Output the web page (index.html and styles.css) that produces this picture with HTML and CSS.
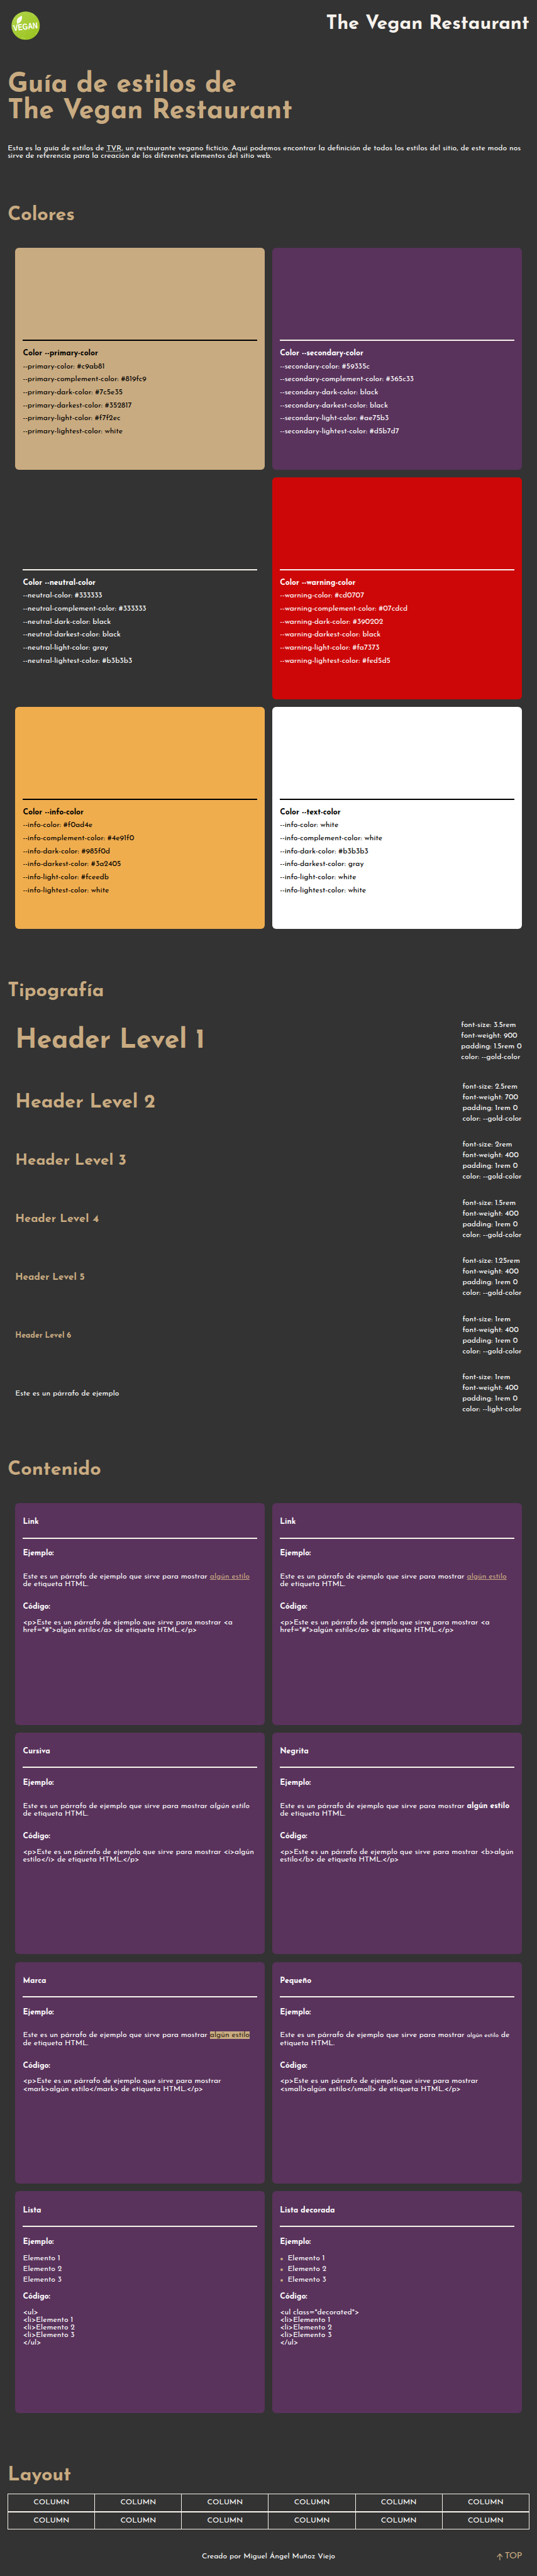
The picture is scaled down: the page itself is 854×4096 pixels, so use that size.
FILE: index.html
```html
<!DOCTYPE html>
<html lang="es">
<head>
<meta charset="utf-8">
<title>Guía de estilos de The Vegan Restaurant</title>
<link rel="stylesheet" href="styles.css">
</head>
<body>
<header class="header">
  <svg class="logo" viewBox="0 0 60 60" role="img" aria-label="Vegan">
    <defs>
      <linearGradient id="leafy" x1="0" y1="0" x2="1" y2="1">
        <stop offset="0" stop-color="#b2d44c"/>
        <stop offset=".5" stop-color="#a5cc33"/>
        <stop offset="1" stop-color="#97c11d"/>
      </linearGradient>
    </defs>
    <circle cx="30" cy="30" r="29.7" fill="url(#leafy)"/>
    <path d="M12 24.500C10 17 14.500 12 22.300 9.500C23 17 20.500 23.500 14 25.200L12.800 27.500Z" fill="#fff"/>
    <path d="M13.500 23L17.500 17.500" stroke="#a9cf3c" stroke-width=".6"/>
    <text class="logo-text" x="5" y="41" textLength="51" lengthAdjust="spacingAndGlyphs" transform="rotate(-6.500 5 41)">VEGAN</text>
    <g fill="#e9f3cf">
      <circle cx="45" cy="5.500" r=".8"/><circle cx="41" cy="3.500" r=".5"/><circle cx="47.500" cy="8" r=".5"/>
      <circle cx="8" cy="15" r=".6"/><circle cx="26" cy="42" r=".6"/><circle cx="27.500" cy="47" r=".5"/>
      <circle cx="24" cy="55" r=".8"/><circle cx="28" cy="57.500" r=".7"/><circle cx="22" cy="57" r=".5"/>
      <circle cx="52" cy="46" r=".7"/><circle cx="56" cy="40" r=".5"/><circle cx="30" cy="4" r=".5"/>
    </g>
  </svg>
  <span class="brand">The Vegan Restaurant</span>
</header>
<main class="main">
  <h1 class="title">Guía de estilos de<br>The Vegan Restaurant</h1>
  <p class="intro">Esta es la guía de estilos de <abbr class="abbr">TVR</abbr>, un restaurante vegano ficticio. Aquí podemos encontrar la definición de todos los estilos del sitio, de este modo nos<br>sirve de referencia para la creación de los diferentes elementos del sitio web.</p>

  <h2 class="section-title section-title--colors">Colores</h2>
  <div class="cards">
    <article class="card card--primary">
      <hr class="swatch-rule">
      <h3 class="swatch-name">Color --primary-color</h3>
      <ul class="swatch-list"><li>--primary-color: #c9ab81</li><li>--primary-complement-color: #819fc9</li><li>--primary-dark-color: #7c5e35</li><li>--primary-darkest-color: #352817</li><li>--primary-light-color: #f7f2ec</li><li>--primary-lightest-color: white</li></ul>
    </article>
    <article class="card card--secondary">
      <hr class="swatch-rule">
      <h3 class="swatch-name">Color --secondary-color</h3>
      <ul class="swatch-list"><li>--secondary-color: #59335c</li><li>--secondary-complement-color: #365c33</li><li>--secondary-dark-color: black</li><li>--secondary-darkest-color: black</li><li>--secondary-light-color: #ae75b3</li><li>--secondary-lightest-color: #d5b7d7</li></ul>
    </article>
    <article class="card card--neutral">
      <hr class="swatch-rule">
      <h3 class="swatch-name">Color --neutral-color</h3>
      <ul class="swatch-list"><li>--neutral-color: #333333</li><li>--neutral-complement-color: #333333</li><li>--neutral-dark-color: black</li><li>--neutral-darkest-color: black</li><li>--neutral-light-color: gray</li><li>--neutral-lightest-color: #b3b3b3</li></ul>
    </article>
    <article class="card card--warning">
      <hr class="swatch-rule">
      <h3 class="swatch-name">Color --warning-color</h3>
      <ul class="swatch-list"><li>--warning-color: #cd0707</li><li>--warning-complement-color: #07cdcd</li><li>--warning-dark-color: #390202</li><li>--warning-darkest-color: black</li><li>--warning-light-color: #fa7373</li><li>--warning-lightest-color: #fed5d5</li></ul>
    </article>
    <article class="card card--info">
      <hr class="swatch-rule">
      <h3 class="swatch-name">Color --info-color</h3>
      <ul class="swatch-list"><li>--info-color: #f0ad4e</li><li>--info-complement-color: #4e91f0</li><li>--info-dark-color: #985f0d</li><li>--info-darkest-color: #3a2405</li><li>--info-light-color: #fceedb</li><li>--info-lightest-color: white</li></ul>
    </article>
    <article class="card card--text">
      <hr class="swatch-rule">
      <h3 class="swatch-name">Color --text-color</h3>
      <ul class="swatch-list"><li>--info-color: white</li><li>--info-complement-color: white</li><li>--info-dark-color: #b3b3b3</li><li>--info-darkest-color: gray</li><li>--info-light-color: white</li><li>--info-lightest-color: white</li></ul>
    </article>
  </div>

  <h2 class="section-title section-title--type">Tipografía</h2>
  <div class="type-rows">
    <div class="type-row type-row--first"><span class="sample sample--1">Header Level 1</span><ul class="specs"><li>font-size: 3.5rem</li><li>font-weight: 900</li><li>padding: 1.5rem 0</li><li>color: --gold-color</li></ul></div>
    <div class="type-row"><span class="sample sample--2">Header Level 2</span><ul class="specs"><li>font-size: 2.5rem</li><li>font-weight: 700</li><li>padding: 1rem 0</li><li>color: --gold-color</li></ul></div>
    <div class="type-row"><span class="sample sample--3">Header Level 3</span><ul class="specs"><li>font-size: 2rem</li><li>font-weight: 400</li><li>padding: 1rem 0</li><li>color: --gold-color</li></ul></div>
    <div class="type-row"><span class="sample sample--4">Header Level 4</span><ul class="specs"><li>font-size: 1.5rem</li><li>font-weight: 400</li><li>padding: 1rem 0</li><li>color: --gold-color</li></ul></div>
    <div class="type-row"><span class="sample sample--5">Header Level 5</span><ul class="specs"><li>font-size: 1.25rem</li><li>font-weight: 400</li><li>padding: 1rem 0</li><li>color: --gold-color</li></ul></div>
    <div class="type-row"><span class="sample sample--6">Header Level 6</span><ul class="specs"><li>font-size: 1rem</li><li>font-weight: 400</li><li>padding: 1rem 0</li><li>color: --gold-color</li></ul></div>
    <div class="type-row"><span class="sample sample--p">Este es un párrafo de ejemplo</span><ul class="specs"><li>font-size: 1rem</li><li>font-weight: 400</li><li>padding: 1rem 0</li><li>color: --light-color</li></ul></div>
  </div>

  <h2 class="section-title section-title--content">Contenido</h2>
  <div class="cards">
    <article class="card card--demo">
      <h3 class="demo-name">Link</h3>
      <hr class="demo-rule">
      <h4 class="demo-label">Ejemplo:</h4>
      <p class="demo-text">Este es un párrafo de ejemplo que sirve para mostrar <a class="link" href="#">algún estilo</a><br>de etiqueta HTML.</p>
      <h4 class="demo-label">Código:</h4>
      <p class="demo-code">&lt;p&gt;Este es un párrafo de ejemplo que sirve para mostrar &lt;a<br>href="#"&gt;algún estilo&lt;/a&gt; de etiqueta HTML.&lt;/p&gt;</p>
    </article>
    <article class="card card--demo">
      <h3 class="demo-name">Link</h3>
      <hr class="demo-rule">
      <h4 class="demo-label">Ejemplo:</h4>
      <p class="demo-text">Este es un párrafo de ejemplo que sirve para mostrar <a class="link" href="#">algún estilo</a><br>de etiqueta HTML.</p>
      <h4 class="demo-label">Código:</h4>
      <p class="demo-code">&lt;p&gt;Este es un párrafo de ejemplo que sirve para mostrar &lt;a<br>href="#"&gt;algún estilo&lt;/a&gt; de etiqueta HTML.&lt;/p&gt;</p>
    </article>
    <article class="card card--demo">
      <h3 class="demo-name">Cursiva</h3>
      <hr class="demo-rule">
      <h4 class="demo-label">Ejemplo:</h4>
      <p class="demo-text">Este es un párrafo de ejemplo que sirve para mostrar <i>algún estilo</i><br>de etiqueta HTML.</p>
      <h4 class="demo-label">Código:</h4>
      <p class="demo-code">&lt;p&gt;Este es un párrafo de ejemplo que sirve para mostrar &lt;i&gt;algún<br>estilo&lt;/i&gt; de etiqueta HTML.&lt;/p&gt;</p>
    </article>
    <article class="card card--demo">
      <h3 class="demo-name">Negrita</h3>
      <hr class="demo-rule">
      <h4 class="demo-label">Ejemplo:</h4>
      <p class="demo-text">Este es un párrafo de ejemplo que sirve para mostrar <b>algún estilo</b><br>de etiqueta HTML.</p>
      <h4 class="demo-label">Código:</h4>
      <p class="demo-code">&lt;p&gt;Este es un párrafo de ejemplo que sirve para mostrar &lt;b&gt;algún<br>estilo&lt;/b&gt; de etiqueta HTML.&lt;/p&gt;</p>
    </article>
    <article class="card card--demo">
      <h3 class="demo-name">Marca</h3>
      <hr class="demo-rule">
      <h4 class="demo-label">Ejemplo:</h4>
      <p class="demo-text">Este es un párrafo de ejemplo que sirve para mostrar <mark class="mark">algún estilo</mark><br>de etiqueta HTML.</p>
      <h4 class="demo-label">Código:</h4>
      <p class="demo-code">&lt;p&gt;Este es un párrafo de ejemplo que sirve para mostrar<br>&lt;mark&gt;algún estilo&lt;/mark&gt; de etiqueta HTML.&lt;/p&gt;</p>
    </article>
    <article class="card card--demo">
      <h3 class="demo-name">Pequeño</h3>
      <hr class="demo-rule">
      <h4 class="demo-label">Ejemplo:</h4>
      <p class="demo-text">Este es un párrafo de ejemplo que sirve para mostrar <small class="small">algún estilo</small> de<br>etiqueta HTML.</p>
      <h4 class="demo-label">Código:</h4>
      <p class="demo-code">&lt;p&gt;Este es un párrafo de ejemplo que sirve para mostrar<br>&lt;small&gt;algún estilo&lt;/small&gt; de etiqueta HTML.&lt;/p&gt;</p>
    </article>
    <article class="card card--demo">
      <h3 class="demo-name">Lista</h3>
      <hr class="demo-rule">
      <h4 class="demo-label">Ejemplo:</h4>
      <ul class="list"><li>Elemento 1</li><li>Elemento 2</li><li>Elemento 3</li></ul>
      <h4 class="demo-label demo-label--tight">Código:</h4>
      <p class="demo-code">&lt;ul&gt;<br>&lt;li&gt;Elemento 1<br>&lt;li&gt;Elemento 2<br>&lt;li&gt;Elemento 3<br>&lt;/ul&gt;</p>
    </article>
    <article class="card card--demo">
      <h3 class="demo-name">Lista decorada</h3>
      <hr class="demo-rule">
      <h4 class="demo-label">Ejemplo:</h4>
      <ul class="list list--decorated"><li>Elemento 1</li><li>Elemento 2</li><li>Elemento 3</li></ul>
      <h4 class="demo-label demo-label--tight">Código:</h4>
      <p class="demo-code">&lt;ul class="decorated"&gt;<br>&lt;li&gt;Elemento 1<br>&lt;li&gt;Elemento 2<br>&lt;li&gt;Elemento 3<br>&lt;/ul&gt;</p>
    </article>
  </div>

  <h2 class="section-title section-title--layout">Layout</h2>
  <div class="grid">
    <div class="cell">COLUMN</div><div class="cell">COLUMN</div><div class="cell">COLUMN</div><div class="cell">COLUMN</div><div class="cell">COLUMN</div><div class="cell">COLUMN</div>
    <div class="cell">COLUMN</div><div class="cell">COLUMN</div><div class="cell">COLUMN</div><div class="cell">COLUMN</div><div class="cell">COLUMN</div><div class="cell">COLUMN</div>
  </div>
</main>
<footer class="footer">
  <span class="credit">Creado por Miguel Ángel Muñoz Viejo</span>
  <a class="top" href="#"><svg class="top-arrow" viewBox="0 0 13 15"><path d="M6.500 15V1M.800 7.500L6.500 1.200L12.200 7.500" fill="none" stroke="currentColor" stroke-width="1.700"/></svg>TOP</a>
</footer>
</body>
</html>
```
FILE: styles.css
```css
:root {
  --primary: #c9ab81;
  --primary-light: #f7f2ec;
  --primary-darkest: #352817;
  --secondary: #59335c;
  --neutral: #333333;
  --warning: #cd0707;
  --info: #f0ad4e;
  --px: 0.0625rem;
  font-size: 12.161px;
}

* { box-sizing: border-box; margin: 0; padding: 0; }

body {
  background: var(--neutral);
  color: #fff;
  font-family: "Josefin Sans", Lato, sans-serif;
  font-size: 1rem;
  line-height: 1rem;
}

ul { list-style: none; }
hr { border: 0; height: 2px; margin-bottom: -.5px; background: var(--primary-light); }
h3, h4 { font-size: 1rem; font-weight: 700; }

.header {
  display: flex;
  justify-content: space-between;
  align-items: flex-start;
  height: calc(107 * var(--px));
  padding: calc(23.5 * var(--px)) 1rem 0 calc(24 * var(--px));
}
.logo { display: block; width: calc(60 * var(--px)); height: calc(60 * var(--px)); overflow: visible; }
.logo-text { font-family: "Liberation Sans", Arial, sans-serif; font-size: 18px; font-weight: 700; fill: #fff; }
.brand {
  margin-top: calc(8.5 * var(--px));
  color: var(--primary-light);
  font-size: 2.5rem;
  font-weight: 700;
  line-height: 1;
}

.main { padding: 0 1rem; }
.title {
  margin-top: calc(44 * var(--px));
  color: var(--primary);
  font-size: 3.5rem;
  font-weight: 700;
  line-height: 1;
  white-space: nowrap;
}
.intro { margin-top: 2.5rem; white-space: nowrap; }
.abbr { text-decoration: underline dotted; }

.section-title {
  color: var(--primary);
  font-size: 2.5rem;
  font-weight: 700;
  line-height: 1;
}
.section-title--colors { margin-top: 6rem; }
.section-title--type { margin-top: 7rem; }
.section-title--content { margin-top: 5rem; }
.section-title--layout { margin-top: 7rem; }

.cards {
  display: grid;
  grid-template-columns: 1fr 1fr;
  grid-auto-rows: 29rem;
  gap: 1rem;
  margin: 3rem 1rem 0;
}
.card {
  display: flow-root;
  padding: 0 1rem;
  border-radius: .5rem;
  white-space: nowrap;
}
.card--primary { background: var(--primary); color: #000; }
.card--secondary, .card--demo { background: var(--secondary); }
.card--neutral { background: var(--neutral); }
.card--warning { background: var(--warning); }
.card--info { background: var(--info); color: #000; }
.card--text { background: #fff; color: #000; }
.card--primary hr, .card--info hr, .card--text hr { background: #000; }

.swatch-rule { margin-top: 12rem; }
.swatch-name { margin-top: 1.2rem; }
.swatch-list { margin-top: calc(5.4 * var(--px)); line-height: 1.7rem; }

.type-rows { margin: 1rem 1rem 0; }
.type-row {
  display: flex;
  align-items: center;
  justify-content: space-between;
  height: 7.6rem;
}
.type-row--first { height: 8.5rem; }
.sample { color: var(--primary); font-weight: 700; line-height: 1; white-space: nowrap; }
.sample--1 { font-size: 3.5rem; }
.sample--2 { font-size: 2.5rem; }
.sample--3 { font-size: 2rem; }
.sample--4 { font-size: 1.5rem; }
.sample--5 { font-size: 1.25rem; }
.sample--6 { font-size: 1rem; }
.sample--p { font-size: 1rem; font-weight: 400; color: #fff; }
.specs { line-height: 1.4rem; }

.demo-name { margin-top: 2rem; }
.demo-rule { margin-top: 1.5rem; }
.demo-label { margin-top: 2rem; }
.demo-rule + .demo-label { margin-top: 1.5rem; }
.demo-label--tight { margin-top: 1rem; }
.demo-text { margin-top: 2rem; }
.demo-code { margin-top: 1rem; }
.link { color: var(--primary); text-decoration: underline; }
.mark { background: var(--primary); color: var(--primary-darkest); }
.small { font-size: .8rem; line-height: 1; }
.list { margin-top: 1rem; line-height: 1.4rem; }
.list--decorated li { display: flex; align-items: center; gap: calc(10 * var(--px)); }
.list--decorated li::before {
  content: "";
  width: calc(5 * var(--px));
  height: calc(5 * var(--px));
  margin-left: calc(1 * var(--px));
  border-radius: 50%;
  background: var(--primary);
}

.grid {
  display: grid;
  grid-template-columns: repeat(6, 1fr);
  grid-auto-rows: calc(38 * var(--px));
  margin-top: 1rem;
  border-left: 1px solid var(--primary-light);
}
.cell {
  padding-top: calc(9.7 * var(--px));
  border: solid var(--primary-light);
  border-width: 1px 1px 1px 0;
  text-align: center;
}

.footer {
  display: grid;
  grid-template-columns: 1fr auto 1fr;
  align-items: start;
  height: calc(95 * var(--px));
  padding: calc(48.4 * var(--px)) 2rem 0;
}
.credit { grid-column: 2; }
.top {
  display: flex;
  justify-content: flex-end;
  align-items: center;
  gap: calc(4 * var(--px));
  color: var(--primary);
  font-size: calc(19 * var(--px));
  font-weight: 400;
  line-height: 1rem;
  letter-spacing: -.04em;
  text-decoration: none;
}
.top-arrow { flex: none; width: calc(13 * var(--px)); height: calc(15 * var(--px)); }
```
